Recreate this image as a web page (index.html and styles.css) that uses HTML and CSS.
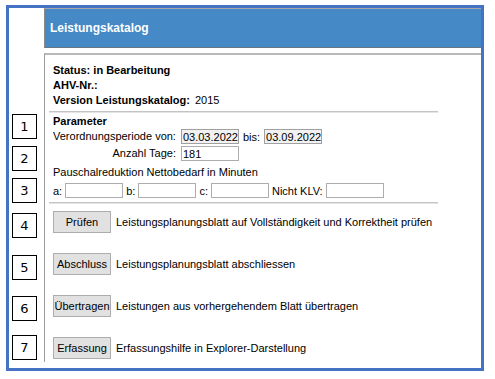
FILE: index.html
```html
<!DOCTYPE html>
<html lang="de">
<head>
<meta charset="utf-8">
<title>Leistungskatalog</title>
<link rel="stylesheet" href="styles.css">
</head>
<body>
<div class="frame">
  <div class="marker m1">1</div>
  <div class="marker m2">2</div>
  <div class="marker m3">3</div>
  <div class="marker m4">4</div>
  <div class="marker m5">5</div>
  <div class="marker m6">6</div>
  <div class="marker m7">7</div>
  <div class="main">
    <div class="header">Leistungskatalog</div>
    <div class="panel">
      <div class="content">
        <div class="info">
          <div class="line"><b>Status: in Bearbeitung</b></div>
          <div class="line"><b>AHV-Nr.:</b></div>
          <div class="line"><b>Version Leistungskatalog:</b><span class="val">2015</span></div>
        </div>
        <div class="sep sep-top"></div>
        <div class="params">
          <div class="line"><b>Parameter</b></div>
          <div class="grid">
            <div class="label">Verordnungsperiode von:</div>
            <div class="field">
              <input class="inp date" type="text" value="03.03.2022" readonly>
              <span>bis:</span>
              <input class="inp date" type="text" value="03.09.2022" readonly>
            </div>
            <div class="label">Anzahl Tage:</div>
            <div class="field">
              <input class="inp days" type="text" value="181">
            </div>
          </div>
          <div class="line pausch">Pauschalreduktion Nettobedarf in Minuten</div>
          <div class="reds">
            <span>a:</span><input class="inp" type="text">
            <span>b:</span><input class="inp" type="text">
            <span>c:</span><input class="inp" type="text">
            <span>Nicht KLV:</span><input class="inp" type="text">
          </div>
        </div>
        <div class="sep sep-bottom"></div>
        <div class="actions">
          <div class="action"><button class="btn">Prüfen</button><span>Leistungsplanungsblatt auf Vollständigkeit und Korrektheit prüfen</span></div>
          <div class="action"><button class="btn">Abschluss</button><span>Leistungsplanungsblatt abschliessen</span></div>
          <div class="action"><button class="btn">Übertragen</button><span>Leistungen aus vorhergehendem Blatt übertragen</span></div>
          <div class="action"><button class="btn">Erfassung</button><span>Erfassungshilfe in Explorer-Darstellung</span></div>
        </div>
      </div>
    </div>
  </div>
</div>
</body>
</html>
```
FILE: styles.css
```css
html, body {
  margin: 0;
  padding: 0;
  background: #ffffff;
}

body {
  font-family: "Liberation Sans", Arial, sans-serif;
  font-size: 11px;
  color: #000000;
}

.frame {
  position: relative;
  margin: 5px 0 0 6px;
  width: 437px;
  height: 360px;
  padding-left: 35px;
  border: 3px solid #4472c4;
  background: #ffffff;
}

.main {
  display: flex;
  flex-direction: column;
}

.header {
  height: 37px;
  padding-top: 1px;
  line-height: 37px;
  padding-left: 5px;
  background: #4589c7;
  border-top: 1px solid #a8a8a8;
  border-left: 1px solid #8a8a8a;
  border-bottom: 1px solid #6a7785;
  color: #ffffff;
  font-weight: bold;
  font-size: 12px;
}

.panel {
  margin-top: 5px;
  border-top: 2px solid #b9b9b9;
  border-left: 1px solid #9a9a9a;
  padding-bottom: 3px;
}

.content {
  margin-left: 4px;
  width: 389px;
}

.info {
  padding: 8px 0 0 4px;
}

.line {
  line-height: 15px;
  height: 15px;
  white-space: nowrap;
}

.val {
  margin-left: 5px;
}

.sep {
  border-top: 1px solid #c4c4c4;
  border-bottom: 1px solid #e4e4e4;
}

.sep-top {
  margin-top: 3px;
}

.sep-bottom {
  margin-top: 4px;
}

.params {
  padding-left: 4px;
  padding-top: 1px;
}

.grid {
  display: grid;
  grid-template-columns: auto 1fr;
  column-gap: 5px;
  row-gap: 2px;
}

.label {
  text-align: right;
  line-height: 15px;
  height: 15px;
  white-space: nowrap;
}

.field {
  display: flex;
  align-items: center;
  gap: 4px;
  height: 15px;
}

.inp {
  box-sizing: border-box;
  width: 58px;
  height: 15px;
  margin: 0;
  padding: 0 0 0 1px;
  border: 1px solid #adadad;
  background: #ffffff;
  font-family: "Liberation Sans", Arial, sans-serif;
  font-size: 11px;
  color: #000000;
  outline: none;
}

.inp.date {
  background: #f1f1f1;
  border-color: #a0a0a0;
}

.pausch {
  margin-top: 4px;
}

.reds {
  display: flex;
  align-items: center;
  gap: 3px;
  height: 15px;
  margin-top: 3px;
  white-space: nowrap;
}

.actions {
  display: flex;
  flex-direction: column;
  gap: 20px;
  margin-top: 7px;
  padding-left: 4px;
}

.action {
  display: flex;
  align-items: center;
  gap: 5px;
  height: 22px;
  white-space: nowrap;
}

.btn {
  box-sizing: border-box;
  width: 58px;
  height: 22px;
  margin: 0;
  padding: 0;
  border: 1px solid #adadad;
  background: #e1e1e1;
  font-family: "Liberation Sans", Arial, sans-serif;
  font-size: 11px;
  color: #000000;
  text-align: center;
}

.marker {
  position: absolute;
  left: 3px;
  box-sizing: border-box;
  width: 25px;
  height: 25px;
  border: 1px solid #000000;
  background: #ffffff;
  font-family: "DejaVu Sans", Verdana, sans-serif;
  font-size: 13px;
  line-height: 23px;
  text-align: center;
  color: #000000;
}

.m1 { top: 106px; }
.m2 { top: 138px; }
.m3 { top: 170px; }
.m4 { top: 205px; }
.m5 { top: 247px; }
.m6 { top: 288px; }
.m7 { top: 327px; }
```
